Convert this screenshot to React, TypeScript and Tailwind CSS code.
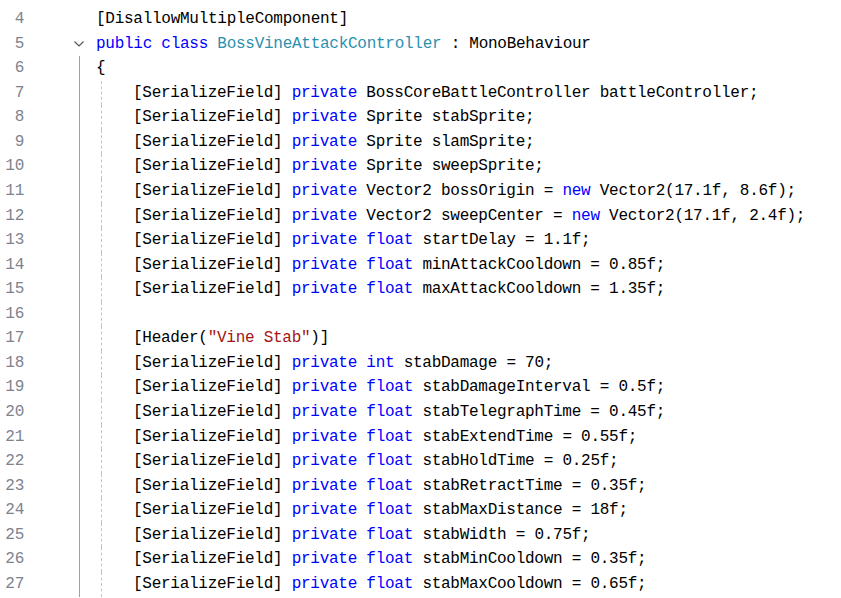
import React from "react";

const KEYWORDS = new Set(["public", "class", "private", "float", "int", "new"]);
const TYPES = new Set(["BossVineAttackController"]);

const lines: [number, string][] = [
  [4, "[DisallowMultipleComponent]"],
  [5, "public class BossVineAttackController : MonoBehaviour"],
  [6, "{"],
  [7, "    [SerializeField] private BossCoreBattleController battleController;"],
  [8, "    [SerializeField] private Sprite stabSprite;"],
  [9, "    [SerializeField] private Sprite slamSprite;"],
  [10, "    [SerializeField] private Sprite sweepSprite;"],
  [11, "    [SerializeField] private Vector2 bossOrigin = new Vector2(17.1f, 8.6f);"],
  [12, "    [SerializeField] private Vector2 sweepCenter = new Vector2(17.1f, 2.4f);"],
  [13, "    [SerializeField] private float startDelay = 1.1f;"],
  [14, "    [SerializeField] private float minAttackCooldown = 0.85f;"],
  [15, "    [SerializeField] private float maxAttackCooldown = 1.35f;"],
  [16, ""],
  [17, '    [Header("Vine Stab")]'],
  [18, "    [SerializeField] private int stabDamage = 70;"],
  [19, "    [SerializeField] private float stabDamageInterval = 0.5f;"],
  [20, "    [SerializeField] private float stabTelegraphTime = 0.45f;"],
  [21, "    [SerializeField] private float stabExtendTime = 0.55f;"],
  [22, "    [SerializeField] private float stabHoldTime = 0.25f;"],
  [23, "    [SerializeField] private float stabRetractTime = 0.35f;"],
  [24, "    [SerializeField] private float stabMaxDistance = 18f;"],
  [25, "    [SerializeField] private float stabWidth = 0.75f;"],
  [26, "    [SerializeField] private float stabMinCooldown = 0.35f;"],
  [27, "    [SerializeField] private float stabMaxCooldown = 0.65f;"],
];

// split a line into coloured tokens
const tokenize = (src: string) => {
  const parts = src.match(/"[^"]*"|[A-Za-z_][A-Za-z0-9_]*|\s+|./g) || [];
  return parts.map((p, i) => {
    let cls = "text-black";
    if (p.startsWith('"')) cls = "text-[#a31515]";
    else if (KEYWORDS.has(p)) cls = "text-[#0000ff]";
    else if (TYPES.has(p)) cls = "text-[#2b91af]";
    return (
      <span key={i} className={cls}>
        {p}
      </span>
    );
  });
};

const Chevron = () => (
  <svg width="12" height="8" viewBox="0 0 12 8" className="ml-[49px] mt-[1px]">
    <path d="M1.5 1.5 L6 6 L10.5 1.5" fill="none" stroke="#555" strokeWidth="1.2" />
  </svg>
);

const CodeLine = ({ n, code }: { n: number; code: string }) => {
  const indented = n >= 7;
  return (
    <div className="flex h-[24.57px] leading-[24.57px]">
      <div className="w-[24px] text-right text-[#7d838f]">{n}</div>
      <div className="w-[72px] flex items-center">
        {n === 5 && <Chevron />}
        {n >= 6 && <div className="ml-[55px] w-px self-stretch bg-[#a0a0a0]" />}
      </div>
      {indented ? (
        <div className="flex flex-1">
          <div className="w-[5px] shrink-0" />
          <div className="flex-1 border-l border-dashed border-[#c4c4c4] pl-[31px] whitespace-pre">
            {tokenize(code.trimStart())}
          </div>
        </div>
      ) : (
        <div className="flex-1 whitespace-pre">{tokenize(code)}</div>
      )}
    </div>
  );
};

export default function App() {
  return (
    <div
      className="w-[841px] h-[598px] overflow-hidden bg-white pt-[7px] text-[16px] tracking-[-0.27px]"
      style={{ fontFamily: '"Liberation Mono", monospace' }}
    >
      {lines.map(([n, code]) => (
        <CodeLine key={n} n={n} code={code} />
      ))}
    </div>
  );
}
